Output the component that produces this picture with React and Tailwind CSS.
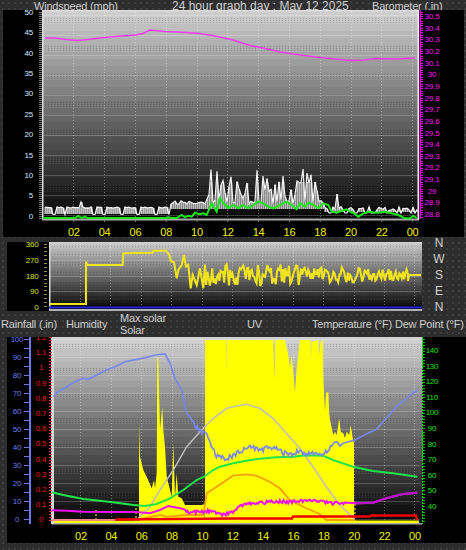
import React from "react";

const rng = (seed) => () => {
  seed = (seed * 1664525 + 1013904223) % 4294967296;
  return seed / 4294967296;
};
const z = (arr, ox, oy) => arr.map(([x, y]) => [ox + x / 3, oy + y / 3]);
const str = (p) => p.map(([x, y]) => `${x.toFixed(1)},${y.toFixed(1)}`).join(" ");
const at = (p, x) => {
  if (x <= p[0][0]) return p[0][1];
  for (let i = 1; i < p.length; i++) {
    if (x <= p[i][0]) {
      const t = (x - p[i - 1][0]) / (p[i][0] - p[i - 1][0] || 1);
      return p[i - 1][1] + t * (p[i][1] - p[i - 1][1]);
    }
  }
  return p[p.length - 1][1];
};
const noisy = (p, x0, x1, amp, seed, step = 1.2) => {
  const r = rng(seed);
  const out = [];
  for (const q of p) if (q[0] < x0) out.push(q);
  for (let x = x0; x < x1; x += step) out.push([x, at(p, x) + (r() - 0.5) * 2 * amp]);
  for (const q of p) if (q[0] >= x1) out.push(q);
  return out;
};

function Plot({ id, x0, x1, y0, y1, top = 205 }) {
  const rows = [];
  const n = 30;
  const h = (y1 - y0) / n;
  for (let i = 0; i < n; i++) {
    const g = Math.round(top - (top - 6) * (i / (n - 1)));
    rows.push(
      <rect key={i} x={x0} y={y0 + i * h} width={x1 - x0} height={h + 1} fill={`rgb(${g},${g},${g})`} />
    );
    if (i % 4 === 1) {
      rows.push(
        <rect key={"d" + i} x={x0} y={y0 + i * h} width={x1 - x0} height={h * 1.4} fill={`url(#${id})`} />
      );
    }
  }
  return (
    <g shapeRendering="crispEdges">
      <defs>
        <pattern id={id} width="3" height="2" patternUnits="userSpaceOnUse">
          <rect width="1" height="1" fill="rgba(0,0,0,.16)" />
          <rect x="2" y="1" width="1" height="1" fill="rgba(255,255,255,.07)" />
        </pattern>
      </defs>
      {rows}
    </g>
  );
}

function TimeLabels({ f, y }) {
  const labels = ["02", "04", "06", "08", "10", "12", "14", "16", "18", "20", "22", "00"];
  return labels.map((t, i) => (
    <text key={t} x={f((i + 1) * 2)} y={y} textAnchor="middle" fontSize="11" fill="#f0f000">
      {t}
    </text>
  ));
}

function Grid({ xs, ys, x0, x1, y0, y1 }) {
  return (
    <g shapeRendering="crispEdges">
      {ys.map((y) => (
        <line key={y} x1={x0} x2={x1} y1={y} y2={y} stroke="rgba(255,255,255,.2)" />
      ))}
      {xs.map((x) => (
        <line key={x} x1={x} x2={x} y1={y0} y2={y1} stroke="rgba(255,255,255,.35)" strokeDasharray="1 2" />
      ))}
    </g>
  );
}

function Ticks({ x0, x1, y0, y1, step, color }) {
  const out = [];
  for (let y = y0; y <= y1; y += step) {
    out.push(<line key={y} x1={x0} x2={x1} y1={y} y2={y} stroke={color} />);
  }
  return <g shapeRendering="crispEdges">{out}</g>;
}

function TopChart() {
  const fx = (h) => 43 + h * 15.4;
  const press = [[45,38],[55,38],[66,39.5],[77,40.5],[88,39.5],[100,38],[115,36.5],[135,35],[143,33.5],[150,30],[165,31.5],[178,32],[200,33.5],[215,36],[233,40],[250,45.5],[263,48],[280,52],[300,55],[320,57.5],[345,60],[352,60.5],[365,60],[375,58.5],[395,59],[415,58]];
  const green = [
    ...z([[10,174],[105,174],[115,168],[125,174],[135,170],[142,174],[380,174],[385,172],[395,174],[410,174],[425,165],[435,172],[445,167],[455,170],[465,158],[478,163],[490,160],[500,165],[515,130],[530,155],[540,115],[550,130],[565,140]], 40, 160),
    ...z([[0,135],[10,145],[25,135],[40,145],[55,135],[70,145],[85,135],[100,125],[115,130],[130,140],[145,145],[165,135],[185,125],[200,135],[215,148],[225,130],[240,140],[250,128],[265,135],[280,145],[295,130],[310,135],[320,155],[335,158],[350,152],[365,148],[375,155],[385,158],[400,170],[415,160],[430,155],[445,157],[460,158],[480,155],[500,160],[520,165],[540,175],[555,175],[565,168],[575,174]], 225, 160),
  ];
  const env = [[172,203],[205,202],[208,195],[210.7,168],[214,185],[217.7,168],[222.7,179],[226,195],[232,173],[238,183],[248,183],[258,169],[263,176],[268,179],[280,182],[283,176],[288,190],[298,180],[303,169],[307,173],[312,175],[315,182],[323,190],[326,205],[337,194],[345,205],[358,198],[368,206],[380,198],[390,205],[400,207],[416,209]];
  const peaks = new Set([211, 217, 223, 232, 238, 248, 258, 263, 268, 280, 283, 298, 303, 307, 312, 315, 337]);
  const r = rng(77);
  const gust = [];
  let on = 0;
  let gapLeft = 0;
  for (let x = 45; x <= 417; x += 2) {
    let y;
    if (x < 170) {
      if (on > 0) {
        y = 207 + r() * 1.2;
        on -= 2;
        if (on <= 0) gapLeft = 2 + Math.floor(r() * 2) * 2;
      } else if (gapLeft > 0) {
        y = 214.5;
        gapLeft -= 2;
      } else {
        y = 207;
        on = 4 + Math.floor(r() * 6) * 2;
      }
      if (x === 81) y = 202;
    } else {
      const t = at(env, x);
      const base = x < 325 ? 202 : 208;
      const hit = peaks.has(x) || peaks.has(x + 1);
      if (hit) y = t;
      else if (x > 205 && x < 325 && r() < 0.6) y = base - r() * (base - t) * 0.85;
      else if (x >= 325 && r() < 0.3) y = 213;
      else y = base + (r() - 0.4) * 4;
    }
    gust.push([x, y]);
  }
  const ys = [];
  for (let i = 0; i <= 10; i++) ys.push(15.5 + i * 20);
  const xs = [];
  for (let h = 2; h <= 24; h += 2) xs.push(fx(h));
  return (
    <svg viewBox="3 10 461 227" className="block w-[461px] h-[227px] bg-black">
      <Plot id="p1" x0={42} x1={419} y0={10} y1={220} top={205} />
      <Grid xs={xs} ys={ys} x0={44} x1={418} y0={12} y1={218} />
      <Ticks x0={39} x1={42} y0={12} y1={218} step={2} color="#777" />
      <Ticks x0={421} x1={423} y0={12} y1={218} step={2.33} color="#ff00ff" />
      <rect x="419.5" y="10" width="1.5" height="209" fill="#e000e0" />
      <rect x="42" y="10" width="377" height="1.5" fill="#ddd" />
      <rect x="42" y="10" width="1.5" height="210" fill="#ddd" />
      <rect x="42" y="218.5" width="377" height="2" fill="#aaa" />
      <rect x="417.5" y="10" width="1.5" height="210" fill="#eee" />
      {xs.map((x) => (
        <line key={x} x1={x} x2={x} y1={220} y2={222} stroke="#777" />
      ))}
      {gust.map(([x, y]) => {
        if (y >= 214) return null;
        const t = x < 170 ? y : Math.max(y, 182);
        const b = x < 170 ? 214 : x < 325 ? 209 : 212;
        return <rect key={x} x={x - 0.6} y={t} width={x < 170 ? 2.2 : 1.8} height={Math.max(0, b - t)} fill="#bcbcbc" />;
      })}
      <polyline points={str(gust)} fill="none" stroke="#f6f6f6" strokeWidth="1.2" />
      <polyline points={str(green)} fill="none" stroke="#18e818" strokeWidth="2" />
      <polyline points={str(press)} fill="none" stroke="#f03cf0" strokeWidth="1.6" />
      {[50, 45, 40, 35, 30, 25, 20, 15, 10, 5, 0].map((v, i) => (
        <text key={v} x={33} y={15 + i * 20.37} textAnchor="end" fontSize="8" fill="#d8e8ff">
          {v}
        </text>
      ))}
      {["30.5","30.4","30.3","30.2","30.1","30","29.9","29.8","29.7","29.6","29.5","29.4","29.3","29.2","29.1","29","28.9","28.8"].map((v, i) => (
        <text key={v} x={432} y={19 + i * 11.65} textAnchor="middle" fontSize="8" fill="#ff10ff">
          {v}
        </text>
      ))}
      <TimeLabels f={fx} y={236} />
    </svg>
  );
}

function MidChart() {
  const head = [
    ...z([[150,207],[258,207],[258,80],[262,90],[368,90],[370,55],[458,53],[460,47],[498,47],[508,60],[512,78],[522,82],[530,130],[535,105],[545,90],[552,60],[558,95],[565,90],[572,160],[578,120],[590,150],[600,100],[610,160]], 0, 235),
  ];
  const r = rng(2025);
  const tail = [];
  for (let x = 205; x < 408; x += 1.2) {
    const amp = x < 300 ? 11 : x < 370 ? 8 : 6;
    tail.push([x, 275 + (r() - 0.5) * 2 * amp]);
  }
  tail.push([408, 281], [409, 275], [421, 275]);
  const ys = [244, 260, 276, 291];
  const xs = [];
  for (let h = 2; h <= 24; h += 2) xs.push(50 + h * 15.2);
  return (
    <svg viewBox="7 242 415 69" className="block w-[415px] h-[69px] bg-black">
      <Plot id="p2" x0={49} x1={422} y0={242} y1={310} top={200} />
      <Grid xs={xs} ys={ys} x0={50} x1={421} y0={244} y1={306} />
      <Ticks x0={44} x1={47} y0={244} y1={307} step={3.9} color="#a08e2c" />
      <rect x="49" y="242" width="373" height="1.5" fill="#d0d0d0" />
      <rect x="49" y="242" width="1.5" height="68" fill="#d8d8d8" />
      <rect x="49" y="306.5" width="373" height="2" fill="#2222d8" />
      <rect x="49" y="309" width="373" height="2" fill="#b0b0b0" />
      <polyline points={str([...head, ...tail])} fill="none" stroke="#efe31e" strokeWidth="2.1" />
      {[["360", 244], ["270", 260], ["180", 276], ["90", 291], ["0", 307]].map(([t, y]) => (
        <text key={t} x={38.5} y={y + 3} textAnchor="end" fontSize="8" fill="#d2e22c">
          {t}
        </text>
      ))}
    </svg>
  );
}

function BottomChart() {
  const fx = (h) => 50.6 + h * 15.18;
  const a = 0, b = 330, c = 233;
  const join = (l, rr) => [...z(l, a, b), ...z(rr, c, b)];
  const humidity = noisy(
    join(
      [[160,200],[175,185],[200,170],[225,155],[248,145],[265,148],[290,135],[320,120],[345,110],[375,95],[410,88],[440,82],[465,75],[495,72],[510,100],[525,145],[545,180],[560,250],[580,280],[600,305],[620,310],[635,350],[650,380],[670,385]],
      [[0,380],[15,365],[30,360],[50,350],[75,360],[100,355],[130,355],[150,370],[175,372],[200,365],[225,370],[250,372],[275,370],[300,345],[330,340],[365,330],[400,312],[430,298],[460,265],[490,230],[520,205],[553,180]]
    ),
    190, 340, 2.6, 11
  );
  const maxSolar = join(
    [[415,565],[450,530],[480,480],[520,420],[560,350],[600,305],[640,265],[680,235]],
    [[0,230],[40,223],[80,235],[120,265],[160,310],[200,355],[240,410],[280,470],[320,525],[365,568]]
  );
  const temp = join(
    [[155,487],[190,495],[250,507],[300,512],[350,518],[400,525],[435,528],[470,522],[510,505],[550,480],[590,450],[612,440],[640,420],[660,410]],
    [[0,400],[40,392],[80,386],[130,382],[180,380],[220,376],[270,377],[300,390],[360,410],[420,423],[480,430],[553,440]]
  );
  const solar = join(
    [[415,568],[480,555],[500,560],[560,555],[610,555],[620,490],[650,470],[680,450]],
    [[0,437],[40,433],[70,437],[110,455],[140,475],[170,510],[220,535],[260,552],[280,570],[365,570]]
  );
  const dew = noisy(
    join(
      [[155,541],[200,542],[250,545],[340,546],[410,546],[450,550],[480,540],[505,528],[540,535],[570,548],[610,545],[640,542],[665,555]],
      [[0,545],[30,525],[70,520],[120,515],[170,515],[220,512],[270,515],[300,520],[370,520],[420,518],[460,505],[510,492],[553,488]]
    ),
    185, 345, 1.7, 5
  );
  const fill = [
    ...z([[417,580],[417,280],[420,380],[430,420],[440,440],[455,475],[462,450],[465,475],[470,430],[472,80],[475,85],[480,300],[487,230],[490,300],[495,350],[500,440],[515,500],[520,340],[525,500],[530,430],[535,500],[545,505],[555,525],[610,525],[612,520]], 0, 330),
    ...z([[45,560],[45,15],[105,15],[108,15],[109,115],[110,15],[250,15],[253,135],[256,15],[285,15],[295,60],[300,100],[305,60],[315,170],[320,100],[330,15],[362,15],[362,80],[365,20],[385,15],[388,60],[392,20],[398,15],[400,130],[405,230],[408,175],[415,170],[418,240],[425,280],[430,300],[435,290],[440,300],[448,250],[452,290],[460,295],[465,310],[470,290],[478,300],[482,270],[490,320],[492,320],[492,570]], 190, 335),
    [354, 523],
    [139, 523],
  ];
  const ys = [];
  for (let i = 0; i <= 10; i++) ys.push(339.5 + i * 18);
  const xs = [];
  for (let h = 2; h <= 24; h += 2) xs.push(fx(h));
  return (
    <svg viewBox="7 337 459 206" className="block w-[459px] h-[206px] bg-black">
      <Plot id="p3" x0={51} x1={422} y0={337} y1={524} top={208} />
      <Grid xs={xs} ys={ys} x0={54} x1={420} y0={339} y1={520} />
      <polygon points={str(fill)} fill="#ffff00" />
      <rect x="52" y="520.5" width="367" height="3" fill="#ffff00" />
      <rect x="52" y="337" width="370" height="2" fill="#cfcfcf" />
      <rect x="52" y="523" width="370" height="1.5" fill="#aaa" />
      <rect x="51" y="337" width="3" height="187" fill="#d8d8d8" />
      <g strokeDasharray="2 2" stroke="#ffff00">
        <line x1="96" x2="96" y1="510" y2="521" />
        <line x1="136" x2="136" y1="504" y2="521" />
        <line x1="355" x2="355" y1="504" y2="521" />
      </g>
      <polyline points={str(maxSolar)} fill="none" stroke="#bdbdbd" strokeWidth="1.5" />
      <polyline points={str(solar)} fill="none" stroke="#f2a010" strokeWidth="1.8" />
      <polyline points={str(temp)} fill="none" stroke="#1ee64a" strokeWidth="2" />
      <polyline points={str(humidity)} fill="none" stroke="#7888ee" strokeWidth="1.7" />
      <polyline points={str(dew)} fill="none" stroke="#ee10f0" strokeWidth="2" />
      <polyline points={str(dew.filter((q) => q[0] >= 354))} fill="none" stroke="#b814c8" strokeWidth="2.2" />
      <polyline points="52,520 115,520" fill="none" stroke="#e88" strokeWidth="2" />
      <polyline points="115,519.5 233,518.5 292,518.5 293,516.5 370,516.5 371,515.5 416,515.5 417,520" fill="none" stroke="#f00000" strokeWidth="2.4" />
      <Ticks x0={24} x1={29} y0={339.5} y1={520} step={9} color="#6a78e8" />
      <rect x="29" y="337" width="2" height="187" fill="#6a78e8" />
      <Ticks x0={49} x1={52} y0={337} y1={522} step={3} color="#e84040" />
      <Ticks x0={422} x1={425} y0={339} y1={524} step={3.1} color="#10c010" />
      <g shapeRendering="crispEdges" stroke="#10e010">
        <line x1="422" x2="422" y1="337" y2="524" strokeDasharray="2 1" />
      </g>
      {[100, 90, 80, 70, 60, 50, 40, 30, 20, 10, 0].map((v, i) => (
        <text key={v} x={17} y={342.3 + i * 18} textAnchor="middle" fontSize="8" fill="#6b7cf0">
          {v}
        </text>
      ))}
      {["1.2","1.1","1","0.9","0.8","0.7","0.6","0.5","0.4","0.3","0.2","0.1","0"].map((v, i) => (
        <text key={v} x={41} y={340 + i * 15.19} textAnchor="middle" fontSize="8" fill="#f01010">
          {v}
        </text>
      ))}
      {[140, 130, 120, 110, 100, 90, 80, 70, 60, 50, 40].map((v, i) => (
        <text key={v} x={432} y={353 + i * 15.6} textAnchor="middle" fontSize="8" fill="#10e010">
          {v}
        </text>
      ))}
      <TimeLabels f={fx} y={540} />
    </svg>
  );
}

export default function App() {
  return (
    <div className="w-[466px] h-[550px] overflow-hidden bg-[#2d2d2d] bg-[radial-gradient(#525252_0.6px,transparent_0.8px)] bg-[length:6px_6px] font-['Liberation_Sans',Arial,sans-serif] text-[11px] tracking-[-0.2px] leading-[12px] text-[#cfcfcf]">
      <div className="flex h-[10px] overflow-hidden pl-[34px] whitespace-nowrap">
        <div className="w-[138px] shrink-0">Windspeed (mph)</div>
        <div className="w-[200px] shrink-0 text-[12px] tracking-normal">24 hour graph day : May 12 2025</div>
        <div className="shrink-0">Barometer (.in)</div>
      </div>
      <div className="pl-[3px]">
        <TopChart />
      </div>
      <div className="flex mt-[5px] pl-[7px] h-[69px]">
        <MidChart />
        <div className="-mt-[5px] h-[76px] w-[34px] flex flex-col justify-between items-center text-[12px] tracking-normal">
          <span>N</span>
          <span>W</span>
          <span>S</span>
          <span>E</span>
          <span>N</span>
        </div>
      </div>
      <div className="flex items-center h-[26px] pl-[1px] whitespace-nowrap">
        <div className="w-[65px] shrink-0">Rainfall (.in)</div>
        <div className="w-[54px] shrink-0">Humidity</div>
        <div className="w-[127px] shrink-0 flex flex-col">
          <span>Max solar</span>
          <span>Solar</span>
        </div>
        <div className="w-[65px] shrink-0">UV</div>
        <div className="shrink-0">Temperature (°F) Dew Point (°F)</div>
      </div>
      <div className="pl-[7px]">
        <BottomChart />
      </div>
    </div>
  );
}
